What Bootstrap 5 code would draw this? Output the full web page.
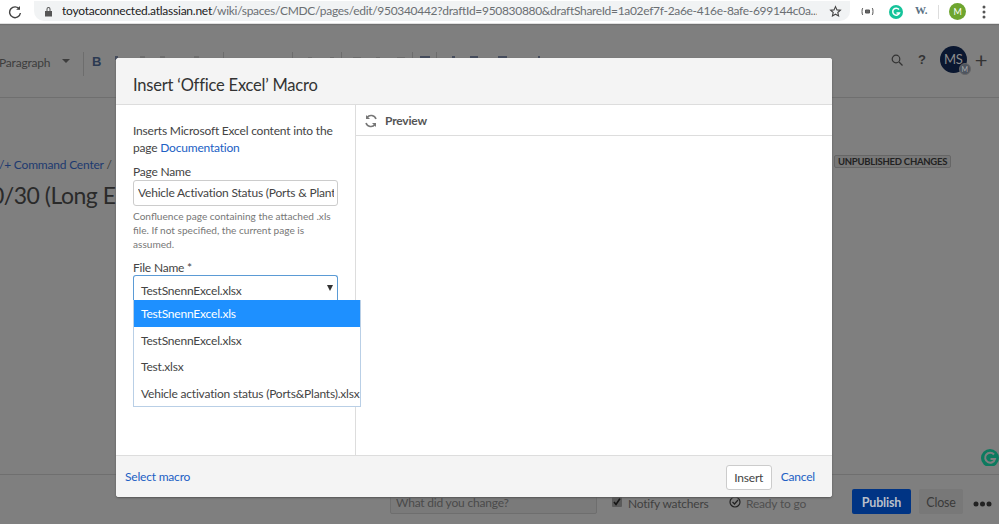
<!DOCTYPE html>
<html lang="en"><head><meta charset="utf-8"><title>Insert Office Excel Macro</title>
<link href="https://cdn.jsdelivr.net/npm/bootstrap@5.3.0/dist/css/bootstrap.min.css" rel="stylesheet">
<style>
html,body{height:524px;width:999px;overflow:hidden}
body{position:relative;background:#7f7f7f;font-family:"Lato","Noto Sans",sans-serif;font-size:12px;letter-spacing:-.2px;color:#3a3a3a}
.chrome-bar{height:24px;background:#fff;border-bottom:1px solid #e0e0e0;box-shadow:0 1px 1px #707070}
.url-pill{width:816px;height:20px;margin-top:-1px;margin-left:12px;border-radius:0 0 10px 10px;background:#f1f3f4;font-size:12px;letter-spacing:-.31px;color:#6b6f73;white-space:nowrap;padding-left:10px}
.url-pill b{font-weight:400;color:#222;letter-spacing:-.24px}
.url-clip{width:755px;overflow:hidden;margin-left:9px}
.ext-w{font:700 11px "Liberation Serif",serif;color:#5a7184;width:16px}
.avatar-m{width:17px;height:17px;border-radius:50%;background:#6ea52f;color:#fff;font-size:9px}
.tool-row{height:74px;border-bottom:1px solid #6f6f6f;padding-top:31px;position:relative}
.para{color:#3d3d3d;margin-left:-1px;width:63px;line-height:16px}
.caret-down{width:0;height:0;border:4px solid transparent;border-top-color:#3d3d3d;border-bottom:0;margin-right:13px}
.tool-bits{margin-top:-3px}
.bold-b{font:700 13px "Liberation Sans",sans-serif;color:#2c3a52;width:12px;margin:-1px 10px 0 8px}
.right-tools{position:absolute;left:891px;top:22px;color:#333}
.help-q{font:700 13px "Liberation Sans",sans-serif;color:#333;margin:0 12px 0 15px}
.user-av{width:27px;height:27px;border-radius:50%;background:#0a1730;color:#8c8c8c;font-size:13px;position:relative;margin-right:8px;margin-left:2px}
.user-sub{position:absolute;right:-4px;bottom:-2px;width:12px;height:12px;border-radius:50%;background:#4e5560;color:#aaa;font-size:7px;border:1px solid #666}
.plus-ic{font-size:22px;line-height:1;color:#333}
.page-area{height:377px;overflow:hidden;position:relative;border-bottom:1px solid #6f6f6f}
.crumb{margin-top:59px;color:#1d3a70;margin-left:-1px;white-space:nowrap;line-height:16px}
.crumb i{font-style:normal;color:#3a3a3a}
.page-title{font-size:23px;letter-spacing:-.5px;color:#2a2a2a;line-height:32px;margin:6px 0 0 -9px;white-space:nowrap;font-weight:400}
.unpub{position:absolute;left:834px;top:57px;height:13px;border:1px solid #666;border-radius:2px;padding:0 3px;font-size:9.5px;letter-spacing:-.25px;line-height:12px;font-weight:700;color:#222;background:#777}
.g-float{position:absolute;left:981px;top:448px;width:18px;height:18px;overflow:hidden}
.bottom-bar{height:49px;position:relative}
.change-in{position:absolute;left:390px;top:14px;width:207px;height:25px;border:1px solid #6e6e6e;border-radius:2px;padding:0 5px;color:#4a4a4a;line-height:26px;background:#7a7a7a}
.bar-item{position:absolute;top:21px;color:#3f3f3f;line-height:16px}
.ready-txt{color:#4f4f4f}
.chk{position:absolute;left:612px;top:22px}
.pub-btn{position:absolute;left:852px;top:14px;width:59px;height:25px;background:#003484;color:#b9bfc9;border-radius:2px;font-weight:700;font-size:12.5px;line-height:27px;text-align:center}
.close-btn{position:absolute;left:919px;top:14px;width:44px;height:25px;background:#787878;color:#3a3a3a;border-radius:2px;font-size:12.5px;line-height:27px;text-align:center}
.dots{position:absolute;left:973px;top:26px}
.macro{position:absolute;left:116px;top:58px;width:716px;height:439px;background:#fff;border-radius:3px;color:#444;box-shadow:0 1px 2px #555}
.macro-head{height:47px;background:#f4f4f4;border-bottom:1px solid #ddd;border-radius:3px 3px 0 0;padding:15px 17px 0;font-size:16.5px;line-height:24px;color:#333}
.macro-main{height:350px}
.macro-left{width:240px;border-right:1px solid #ddd;padding:18px 17px 0;line-height:16.5px;color:#444;position:relative}
.macro-left a,.macro-foot a{color:#2160c4;text-decoration:none}
.lbl{margin-top:8px;line-height:16px}
.page-in{width:205px;height:26px;border:1px solid #ccc;border-radius:3px;padding:0 3px 0 4px;line-height:24px;color:#444}
.page-val{overflow:hidden;white-space:nowrap}
.help-txt{font-size:10.1px;letter-spacing:0;line-height:14px;color:#777;margin-top:3px}
.file-lbl{margin-top:9px;line-height:15px}
.sel-box{width:205px;height:25px;border:1px solid #5b9bd5;border-bottom:0;border-radius:3px 3px 0 0;padding:6px 7px 0;position:relative;line-height:17px}
.sel-arrow{position:absolute;right:4px;top:9px;width:0;height:0;border:3px solid transparent;border-top:6px solid #333;border-bottom:0}
.opt-list{position:absolute;left:17px;top:195px;width:228px;background:#fff;border:1px solid #b9cfe6;border-top:0;z-index:5}
.opt-item{height:26.5px;padding:0 7px;line-height:28px;white-space:nowrap;color:#444}
.opt-item.active-opt{background:#1e90ff;color:#fff}
.macro-right{flex:1}
.prev-head{height:31px;border-bottom:1px solid #ddd;padding:1px 0 0 8px;font-weight:700;color:#555}
.prev-ic{margin-right:7px}
.macro-foot{height:42px;background:#f4f4f4;border-top:1px solid #ddd;border-radius:0 0 3px 3px;padding:1px 17px 0 9px}
.ins-btn{width:46px;height:25px;border:1px solid #ccc;border-radius:3px;background:#fff;color:#444;line-height:23px;text-align:center;margin-right:9px}
</style></head>
<body>
<div class="chrome-bar d-flex align-items-center">
  <svg style="margin-left:8px" width="14" height="14" viewBox="0 0 14 14" fill="none" stroke="#444" stroke-width="1.4"><path d="M11.5 4.2A5.4 5.4 0 1 0 12.4 8"/><path d="M12 1v3.8H8.2" fill="#444" stroke="none"/></svg>
  <div class="url-pill d-flex align-items-center">
    <svg width="9" height="11" viewBox="0 0 9 11"><path fill="#555" d="M1 5h7v5.5H1zM2.5 5V3a2 2 0 0 1 4 0v2h-1V3a1 1 0 0 0-2 0v2z"/></svg>
    <div class="url-clip"><b>toyotaconnected.atlassian.net</b>/wiki/spaces/CMDC/pages/edit/950340442?draftId=950830880&amp;draftShareId=1a02ef7f-2a6e-416e-8afe-699144c0a...</div>
    <svg style="margin-left:12px" width="13" height="13" viewBox="0 0 24 24" fill="none" stroke="#444" stroke-width="2"><path d="M12 3l2.7 6 6.3.6-4.8 4.2 1.5 6.4L12 17l-5.700 3.200 1.500-6.400L3 9.600 9.300 9z"/></svg>
  </div>
  <div class="d-flex align-items-center" style="margin-left:11px">
    <svg width="13" height="9" viewBox="0 0 13 9" fill="none" stroke="#555"><path d="M2 1Q1 1 1 4.500Q1 8 2 8M11 1Q12 1 12 4.500Q12 8 11 8"/><path d="M4.500 3h4v3h-4z" fill="#666"/></svg>
    <svg style="margin-left:15px" width="14" height="14" viewBox="0 0 14 14"><circle cx="7" cy="7" r="7" fill="#15c39a"/><path d="M10 4.500A3.500 3.500 0 1 0 10.500 8H7.500" fill="none" stroke="#fff" stroke-width="1.500"/></svg>
    <span class="ext-w" style="margin-left:12px;margin-top:-3px">W.</span>
    <svg width="1" height="14" style="margin:0 10px 0 7px"><rect width="1" height="14" fill="#ddd"/></svg>
    <span class="avatar-m d-flex align-items-center justify-content-center">M</span>
    <svg style="margin-left:16px" width="4" height="14" viewBox="0 0 4 14" fill="#555"><circle cx="2" cy="2" r="1.500"/><circle cx="2" cy="7" r="1.500"/><circle cx="2" cy="12" r="1.500"/></svg>
  </div>
</div>
<div class="tool-row d-flex align-items-start">
  <span class="para">Paragraph</span><span class="caret-down mt-1"></span>
  <svg class="tool-bits" width="1" height="24"><rect width="1" height="24" fill="#6d6d6d"/></svg>
  <span class="bold-b">B</span>
  <svg class="tool-bits" width="460" height="24" viewBox="0 0 460 24">
    <g fill="#6c6c6c"><rect x="109" width="1" height="24"/><rect x="178" width="1" height="24"/><rect x="227" width="1" height="24"/><rect x="298" width="1" height="24"/><rect x="322" width="1" height="24"/></g>
    <g fill="#454c5c"><rect x="306" y="4" width="10" height="4"/><rect x="356" y="4" width="8" height="4"/><rect x="384" y="4" width="9" height="4"/><rect x="1" y="4" width="3" height="4"/><rect x="338" y="4" width="3" height="4"/><rect x="424" y="4" width="2" height="4"/></g>
    <g fill="#6e6e6e"><rect x="26" y="4" width="5" height="3"/><rect x="46" y="4" width="5" height="3"/><rect x="80" y="4" width="5" height="3"/><rect x="194" y="5" width="4" height="3"/><rect x="216" y="5" width="4" height="3"/><rect x="239" y="5" width="8" height="3"/><rect x="262" y="5" width="4" height="3"/><rect x="283" y="5" width="8" height="3"/></g>
  </svg>
  <div class="right-tools d-flex align-items-center">
    <svg width="12" height="12" viewBox="0 0 12 12" fill="none" stroke="#333" stroke-width="1.200"><circle cx="5" cy="5" r="3.800"/><path d="M8 8l3.500 3.500"/></svg>
    <span class="help-q">?</span>
    <span class="user-av d-flex align-items-center justify-content-center">MS<span class="user-sub d-flex align-items-center justify-content-center">M</span></span>
    <span class="plus-ic">+</span>
  </div>
</div>
<div class="page-area">
  <div class="crumb">/+ Command Center <i>/</i></div>
  <div class="page-title">0/30 (Long E</div>
  <div class="unpub">UNPUBLISHED CHANGES</div>
</div>
<div class="bottom-bar">
  <div class="change-in">What did you change?</div>
  <svg class="chk" width="10" height="10" viewBox="0 0 10 10"><rect width="10" height="10" rx="1" fill="#5a5a5a"/><path d="M2 5l2 2.500L8 1.500" fill="none" stroke="#151515" stroke-width="1.600"/></svg>
  <span class="bar-item" style="left:628px">Notify watchers</span>
  <svg class="bar-item" style="left:729px" width="12" height="12" viewBox="0 0 12 12" fill="none" stroke="#222" stroke-width="1.200"><circle cx="6" cy="6" r="5"/><path d="M3.500 6l2 2L9 4"/></svg>
  <span class="bar-item ready-txt" style="left:746px">Ready to go</span>
  <div class="pub-btn">Publish</div>
  <div class="close-btn">Close</div>
  <svg class="dots" width="19" height="6" fill="#222"><circle cx="3" cy="3" r="2.500"/><circle cx="9.500" cy="3" r="2.500"/><circle cx="16" cy="3" r="2.500"/></svg>
</div>
<div class="g-float"><svg width="18" height="18" viewBox="0 0 18 18"><circle cx="9" cy="9" r="9" fill="#0d7a5f"/><path d="M13 5.500A5 5 0 1 0 14 10H9.500" fill="none" stroke="#7f7f7f" stroke-width="2"/></svg></div>

<div class="macro d-flex flex-column">
  <div class="macro-head">Insert ‘Office Excel’ Macro</div>
  <div class="macro-main d-flex">
    <div class="macro-left">
      <div>Inserts Microsoft Excel content into the page <a href="#">Documentation</a></div>
      <div class="lbl">Page Name</div>
      <div class="page-in"><div class="page-val">Vehicle Activation Status (Ports &amp; Plants)</div></div>
      <div class="help-txt">Confluence page containing the attached .xls file. If not specified, the current page is assumed.</div>
      <div class="file-lbl">File Name *</div>
      <div class="sel-box">TestSnennExcel.xlsx<span class="sel-arrow"></span></div>
      <div class="opt-list">
        <div class="opt-item active-opt">TestSnennExcel.xls</div>
        <div class="opt-item">TestSnennExcel.xlsx</div>
        <div class="opt-item">Test.xlsx</div>
        <div class="opt-item">Vehicle activation status (Ports&amp;Plants).xlsx</div>
      </div>
    </div>
    <div class="macro-right">
      <div class="prev-head d-flex align-items-center">
        <svg class="prev-ic" width="14" height="14" viewBox="0 0 14 14" fill="none" stroke="#777" stroke-width="1.600"><path d="M12 5A5.200 5.200 0 0 0 3 3.500M2 9a5.200 5.200 0 0 0 9 1.500"/><path d="M2 1v4h4M12 13V9H8" fill="#777" stroke="none"/></svg>
        <span>Preview</span>
      </div>
    </div>
  </div>
  <div class="macro-foot d-flex align-items-center justify-content-between">
    <a href="#">Select macro</a>
    <div class="d-flex align-items-center"><span class="ins-btn">Insert</span><a href="#">Cancel</a></div>
  </div>
</div>
</body></html>
